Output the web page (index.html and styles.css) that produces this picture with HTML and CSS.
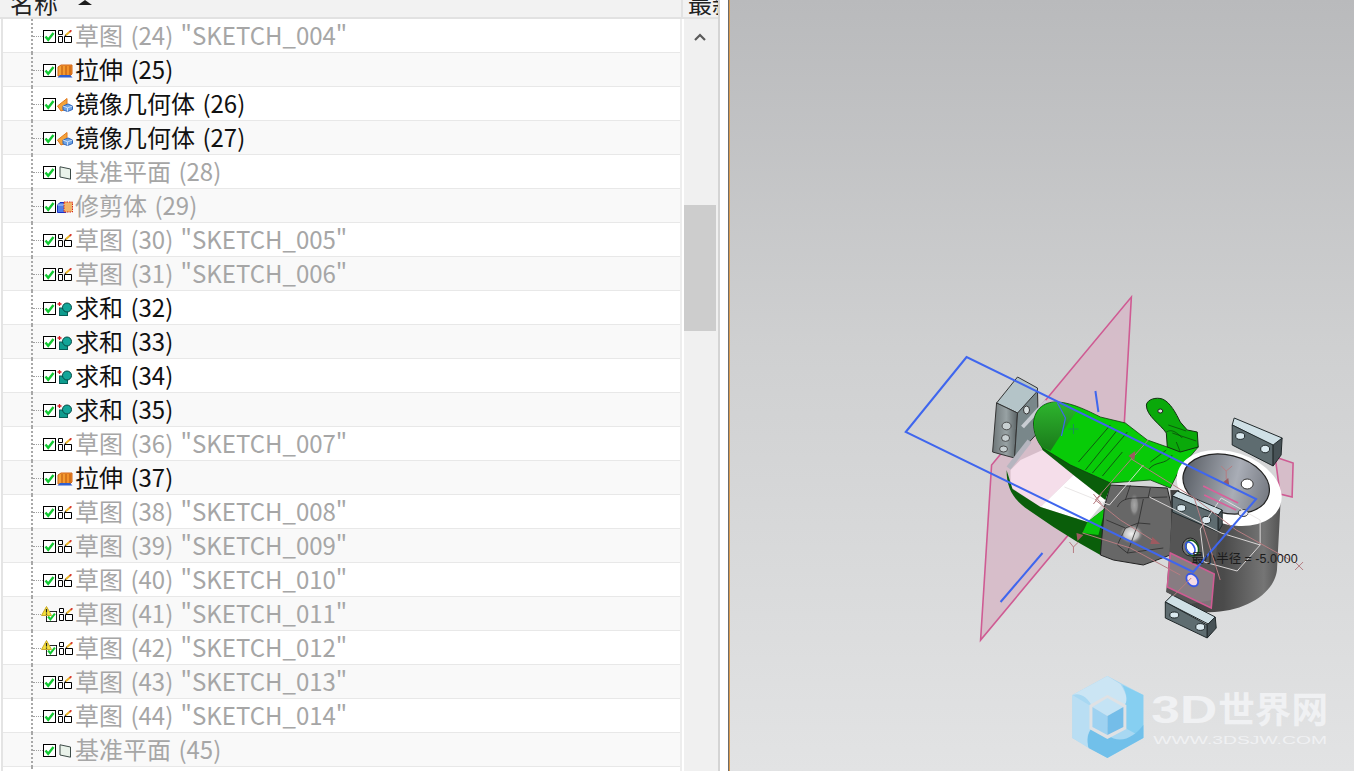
FILE: index.html
```html
<!DOCTYPE html>
<html lang="zh">
<head>
<meta charset="utf-8">
<title>部件导航器</title>
<link rel="stylesheet" href="styles.css">
</head>
<body>
<svg class="sprite" aria-hidden="true">
  <defs>
    <linearGradient id="ext" x1="0" x2="1" y1="0" y2="0">
      <stop offset="0" stop-color="#f7a63a"/>
      <stop offset="1" stop-color="#f08a22"/>
    </linearGradient>
    <symbol id="i-check" viewBox="0 0 13 13">
      <rect x="0.5" y="0.5" width="12" height="12" fill="#fff" stroke="#000"/>
      <path d="M2.5 6.5 L5.2 9.8 L10.5 3" fill="none" stroke="#12c832" stroke-width="2.4"/>
    </symbol>
    <symbol id="i-warn" viewBox="0 0 11 10">
      <path d="M5.5 0.5 L10.5 9.5 H0.5 Z" fill="#f6e13a" stroke="#c9a92c"/>
      <path d="M5.5 3 V6.5 M5.5 7.5 V8.8" stroke="#222" stroke-width="1.2"/>
    </symbol>
    <symbol id="i-sketch" viewBox="0 0 16 14">
      <path d="M1.5 .5 H5.5 V4.5 H1.5 Z M1.5 6.5 H5.5 V12.5 H1.5 Z M7.5 6.5 H14.5 V12.5 H7.5 Z" fill="#fff" stroke="#000"/>
      <path d="M8.5 5.5 L13 1.5" stroke="#e9b52a" stroke-width="2"/>
      <path d="M12.6 1.9 L14.4 0.3" stroke="#d8352a" stroke-width="1.8"/>
      <path d="M7.6 6 L9 5" stroke="#333"/>
    </symbol>
    <symbol id="i-extrude" viewBox="0 0 16 14">
      <path d="M1 3 L4 1 H15 V10 L13 12 H1 Z" fill="url(#ext)" stroke="#d2661a"/>
      <path d="M5 2 V11 M9 2 V11 M13 2 V11" stroke="#b9540f"/>
      <path d="M0.5 13.5 L3 11 H13 L15.5 13.5 Z" fill="#2f5fd0"/>
    </symbol>
    <symbol id="i-mirror" viewBox="0 0 16 14">
      <path d="M0.5 8 L10 .5 V11 L4 13 Z" fill="#f5a33a" stroke="#e0791c"/>
      <path d="M6 8 L11 6 L15.5 8 V11.5 L10.5 13.5 L6 11.8 Z" fill="#6ea4e6" stroke="#2d63b8"/>
      <path d="M6 8 L10.5 9.8 L15.5 8 M10.5 9.8 V13.5" fill="none" stroke="#cfe0f6"/>
    </symbol>
    <symbol id="i-plane" viewBox="0 0 13 14">
      <path d="M1.5 .8 L12 3 V13.2 L1.5 11 Z" fill="#e9f2ea" stroke="#3c4a46"/>
    </symbol>
    <symbol id="i-trim" viewBox="0 0 16 13">
      <path d="M.5 4.5 L3 2 H9 V12 H.5 Z" fill="#4f7fe8" stroke="#1a30c8"/>
      <path d="M.5 4.5 H8" stroke="#b8cdf6"/>
      <rect x="7" y="1.5" width="8.5" height="10" fill="#f2b46a" stroke="#d8261e" stroke-dasharray="1.5 1"/>
    </symbol>
    <symbol id="i-unite" viewBox="0 0 16 14">
      <path d="M2.5 0 V4 M.5 2 H4.5" stroke="#d91a20" stroke-width="1.3"/>
      <rect x="2.5" y="6" width="8" height="7.5" fill="#0e9c8e" stroke="#065f58"/>
      <circle cx="10" cy="5.5" r="4.5" fill="#13a598" stroke="#064a44"/>
    </symbol>
    <symbol id="i-up" viewBox="0 0 12 8">
      <path d="M1 7 L6 2 L11 7" fill="none" stroke="#5a5a5a" stroke-width="2.2"/>
    </symbol>
  </defs>
</svg>

<div class="app">
  <section class="navigator">
    <header class="head">
      <div class="head-name"><span class="head-label">名称</span><span class="sort-arrow"></span></div>
      <div class="head-last"><span class="head-label">最新</span></div>
    </header>
    <div class="body">
      <ul class="tree">
        <li class="row dim"><span class="stem"></span><svg class="check"><use href="#i-check"/></svg><svg class="icon"><use href="#i-sketch"/></svg><span class="label">草图 (24) "SKETCH_004"</span></li>
        <li class="row"><span class="stem"></span><svg class="check"><use href="#i-check"/></svg><svg class="icon"><use href="#i-extrude"/></svg><span class="label">拉伸 (25)</span></li>
        <li class="row"><span class="stem"></span><svg class="check"><use href="#i-check"/></svg><svg class="icon"><use href="#i-mirror"/></svg><span class="label">镜像几何体 (26)</span></li>
        <li class="row"><span class="stem"></span><svg class="check"><use href="#i-check"/></svg><svg class="icon"><use href="#i-mirror"/></svg><span class="label">镜像几何体 (27)</span></li>
        <li class="row dim"><span class="stem"></span><svg class="check"><use href="#i-check"/></svg><svg class="icon"><use href="#i-plane"/></svg><span class="label">基准平面 (28)</span></li>
        <li class="row dim"><span class="stem"></span><svg class="check"><use href="#i-check"/></svg><svg class="icon"><use href="#i-trim"/></svg><span class="label">修剪体 (29)</span></li>
        <li class="row dim"><span class="stem"></span><svg class="check"><use href="#i-check"/></svg><svg class="icon"><use href="#i-sketch"/></svg><span class="label">草图 (30) "SKETCH_005"</span></li>
        <li class="row dim"><span class="stem"></span><svg class="check"><use href="#i-check"/></svg><svg class="icon"><use href="#i-sketch"/></svg><span class="label">草图 (31) "SKETCH_006"</span></li>
        <li class="row"><span class="stem"></span><svg class="check"><use href="#i-check"/></svg><svg class="icon"><use href="#i-unite"/></svg><span class="label">求和 (32)</span></li>
        <li class="row"><span class="stem"></span><svg class="check"><use href="#i-check"/></svg><svg class="icon"><use href="#i-unite"/></svg><span class="label">求和 (33)</span></li>
        <li class="row"><span class="stem"></span><svg class="check"><use href="#i-check"/></svg><svg class="icon"><use href="#i-unite"/></svg><span class="label">求和 (34)</span></li>
        <li class="row"><span class="stem"></span><svg class="check"><use href="#i-check"/></svg><svg class="icon"><use href="#i-unite"/></svg><span class="label">求和 (35)</span></li>
        <li class="row dim"><span class="stem"></span><svg class="check"><use href="#i-check"/></svg><svg class="icon"><use href="#i-sketch"/></svg><span class="label">草图 (36) "SKETCH_007"</span></li>
        <li class="row"><span class="stem"></span><svg class="check"><use href="#i-check"/></svg><svg class="icon"><use href="#i-extrude"/></svg><span class="label">拉伸 (37)</span></li>
        <li class="row dim"><span class="stem"></span><svg class="check"><use href="#i-check"/></svg><svg class="icon"><use href="#i-sketch"/></svg><span class="label">草图 (38) "SKETCH_008"</span></li>
        <li class="row dim"><span class="stem"></span><svg class="check"><use href="#i-check"/></svg><svg class="icon"><use href="#i-sketch"/></svg><span class="label">草图 (39) "SKETCH_009"</span></li>
        <li class="row dim"><span class="stem"></span><svg class="check"><use href="#i-check"/></svg><svg class="icon"><use href="#i-sketch"/></svg><span class="label">草图 (40) "SKETCH_010"</span></li>
        <li class="row dim warned"><span class="stem"></span><svg class="warn"><use href="#i-warn"/></svg><svg class="check"><use href="#i-check"/></svg><svg class="icon"><use href="#i-sketch"/></svg><span class="label">草图 (41) "SKETCH_011"</span></li>
        <li class="row dim warned"><span class="stem"></span><svg class="warn"><use href="#i-warn"/></svg><svg class="check"><use href="#i-check"/></svg><svg class="icon"><use href="#i-sketch"/></svg><span class="label">草图 (42) "SKETCH_012"</span></li>
        <li class="row dim"><span class="stem"></span><svg class="check"><use href="#i-check"/></svg><svg class="icon"><use href="#i-sketch"/></svg><span class="label">草图 (43) "SKETCH_013"</span></li>
        <li class="row dim"><span class="stem"></span><svg class="check"><use href="#i-check"/></svg><svg class="icon"><use href="#i-sketch"/></svg><span class="label">草图 (44) "SKETCH_014"</span></li>
        <li class="row dim"><span class="stem"></span><svg class="check"><use href="#i-check"/></svg><svg class="icon"><use href="#i-plane"/></svg><span class="label">基准平面 (45)</span></li>
        <li class="row"></li>
      </ul>
      <div class="column-rest"></div>
      <div class="scrollbar">
        <svg class="scroll-up"><use href="#i-up"/></svg>
        <div class="scroll-thumb"></div>
      </div>
    </div>
  </section>
  <div class="gutter"></div>
  <main class="viewport">
    <svg class="scene" viewBox="729 0 625 771" preserveAspectRatio="none">
      <defs>
        <linearGradient id="cyl" x1="0" x2="1" y1="0" y2="0">
          <stop offset="0" stop-color="#3f3f3f"/>
          <stop offset=".5" stop-color="#4b4b4b"/>
          <stop offset=".85" stop-color="#757575"/>
          <stop offset="1" stop-color="#525252"/>
        </linearGradient>
        <linearGradient id="bore" x1="0" x2="1" y1="0" y2="0">
          <stop offset="0" stop-color="#5c6168"/>
          <stop offset=".6" stop-color="#a9adb6"/>
          <stop offset="1" stop-color="#767a82"/>
        </linearGradient>
        <linearGradient id="block" x1="0" x2="1" y1="0" y2="0">
          <stop offset="0" stop-color="#6e7678"/>
          <stop offset=".55" stop-color="#98a2a4"/>
          <stop offset="1" stop-color="#596163"/>
        </linearGradient>
        <radialGradient id="shine">
          <stop offset="0" stop-color="#f2f2f2"/>
          <stop offset=".6" stop-color="#c0c0c0"/>
          <stop offset="1" stop-color="#6a6a6a" stop-opacity="0"/>
        </radialGradient>
        <linearGradient id="greenleft" x1="0" x2="0" y1="0" y2="1">
          <stop offset="0" stop-color="#2eb52e"/>
          <stop offset="1" stop-color="#1a7a1a"/>
        </linearGradient>
      </defs>

      <!-- datum planes behind the part -->
      <path class="plane" d="M1131 297 L1124 422 L1067 536 L980 640 L991 465 Z"/>
      <path class="plane" d="M1275 457 L1293 463 L1292 497 L1280 494 Z"/>

      <!-- left block -->
      <path fill="#b4c4c8" stroke="#333" d="M996 403 L1017 377 L1037 388 L1036 410 L1017 413 Z"/>
      <path fill="url(#block)" stroke="#333" d="M996 403 L1017 413 L1014 458 L992 452 Z"/>
      <path fill="#79878a" stroke="#333" d="M1017 413 L1037 391 L1038 432 L1014 458 Z"/>
      <ellipse class="hole" cx="1006" cy="426" rx="4.5" ry="3.8"/>
      <ellipse class="hole" cx="1005" cy="438" rx="4" ry="3.4"/>
      <ellipse class="hole" cx="1003" cy="449" rx="4" ry="3"/>
      <ellipse cx="1026" cy="410" rx="3" ry="4" fill="#d8dfe0" stroke="#333"/>
      <path d="M1022 427 L1046 401" stroke="#c8ccd2" stroke-width="4"/>
      <path d="M1008 468 L1029 441" stroke="#b5b5bf" stroke-width="5"/>

      <!-- loop opening -->
      <path fill="#f5deea" d="M1010 470 L1020 460 L1042 450 L1073 475 L1040 507 L1010 487 Z"/>
      <path fill="#fff" d="M1073 475 L1105 500 L1087 522 L1040 507 Z"/>

      <!-- lower green band -->
      <path fill="#0a5e0a" d="M1006 470 C1006 490 1014 500 1028 510 L1053 527 L1077 542 L1100 555 L1106 507 L1087 522 L1040 507 L1012 489 Z"/>
      <path fill="#0bc40b" d="M1087 522 L1105 508 L1098 535 L1082 533 Z"/>

      <!-- central grey arm -->
      <path fill="#676767" stroke="#222" d="M1110 485 L1167 488 L1172 510 L1170 555 L1143 565 L1113 560 L1100 555 L1104 507 Z"/>
      <ellipse cx="1131" cy="534" rx="12" ry="10" fill="url(#shine)"/>
      <ellipse cx="1134" cy="505" rx="5" ry="12" fill="url(#shine)" opacity=".45"/>
      <path d="M1117 507 C1120 500 1127 498 1135 498 L1167 497 M1143 499 L1138 523 L1127 553 M1125 528 L1117 545 L1127 553 L1163 548 M1106 520 L1125 528 L1138 523 L1150 524 M1130 485 L1125 500 M1150 488 L1148 497" fill="none" stroke="#2c2c2c" stroke-width=".8"/>

      <!-- cylinder -->
      <path fill="url(#cyl)" d="M1170 490 C1172 520 1170 570 1166 592 L1204 612 C1245 614 1277 592 1277 567 L1281 492 Z"/>

      <!-- upper dark band and green body -->
      <path fill="#0a5e0a" d="M1033 423 L1042 450 L1073 475 L1105 500 L1111 483 L1060 440 Z"/>
      <path fill="#08cb08" stroke="#0f3d0f" stroke-width=".8" d="M1033 423 C1034 408 1045 401 1058 402 C1072 403 1088 411 1100 417 L1125 423 L1147 440 L1167 447 L1198 447 L1180 468 L1170 488 L1150 480 L1110 483 L1070 465 L1042 448 C1037 442 1033 433 1033 423 Z"/>
      <path fill="url(#greenleft)" d="M1034 423 C1035 409 1046 402 1058 402 L1076 411 L1050 451 L1043 448 C1037 442 1033 433 1034 423 Z"/>
      <path d="M1085 470 L1117 430 M1092 473 L1127 432 M1078 462 L1110 425 M1102 476 L1122 452 M1150 462 L1166 450 M1148 470 C1155 460 1165 466 1172 455" fill="none" stroke="#123d12" stroke-width=".8"/>
      <path d="M1068 429 H1078 M1073 424 V434" stroke="#1c8f5a"/>

      <!-- top of cylinder -->
      <ellipse cx="1229" cy="488" rx="54" ry="36" fill="#fff" transform="rotate(18 1229 488)"/>
      <ellipse cx="1226" cy="484" rx="44" ry="29" fill="url(#bore)" stroke="#222" stroke-width="1.2" transform="rotate(14 1226 484)"/>
      <ellipse cx="1247" cy="484" rx="6" ry="5" fill="#fff" stroke="#333"/>
      <ellipse cx="1243" cy="513" rx="5" ry="3.5" fill="#e9e9f0" stroke="#333"/>

      <!-- green handle -->
      <path fill="#0aa90a" stroke="#123012" d="M1146 405 C1147 399 1156 397 1162 399 C1170 402 1176 414 1180 422 L1187 430 L1197 432 L1198 447 L1180 452 L1167 447 L1166 433 C1160 424 1146 416 1146 405 Z"/>
      <ellipse cx="1160" cy="411" rx="2.5" ry="2" fill="#ddd" stroke="#222"/>
      <path d="M1168 425 L1186 431 M1172 433 L1196 441 M1176 442 L1180 452 M1166 432 C1172 428 1178 434 1182 438" fill="none" stroke="#0a3f0a" stroke-width=".7"/>

      <!-- lugs -->
      <path class="lug-top" d="M1234 418 L1282 438 L1275 447 L1232 425 Z"/>
      <path class="lug-front" d="M1232 425 L1273 445 L1273 466 L1232 445 Z"/>
      <path class="lug-side" d="M1282 438 L1281 455 L1273 466 L1273 445 Z"/>
      <ellipse class="lug-hole" cx="1240" cy="436" rx="4.5" ry="3.4"/>
      <ellipse class="lug-hole" cx="1265" cy="449" rx="4.5" ry="3.8"/>

      <path fill="#555" d="M1172 512 L1218 532 L1212 600 L1190 604 L1166 592 L1170 540 Z"/>
      <ellipse cx="1190" cy="547" rx="8" ry="9" fill="#777" stroke="#222"/>
      <path class="lug-top" d="M1177 491 L1222 510 L1218 515 L1172 496 Z"/>
      <path class="lug-front" d="M1172 496 L1218 515 L1218 532 L1172 512 Z"/>
      <path class="lug-side" d="M1222 510 L1222 525 L1218 532 L1218 515 Z"/>
      <ellipse class="lug-hole" cx="1181" cy="508" rx="4.5" ry="3.4"/>
      <ellipse class="lug-hole" cx="1206" cy="520" rx="4.5" ry="3.6"/>

      <path class="lug-top" d="M1172 595 L1215 617 L1208 624 L1165 602 Z"/>
      <path class="lug-front" d="M1165 602 L1207 625 L1207 638 L1165 618 Z"/>
      <path class="lug-side" d="M1215 617 L1216 628 L1207 638 L1207 625 Z"/>
      <ellipse class="lug-hole" cx="1174" cy="615" rx="4.5" ry="3"/>
      <ellipse class="lug-hole" cx="1200" cy="627" rx="4.5" ry="3.4"/>

      <!-- hole on arm and small datum -->
      <ellipse cx="1192" cy="548" rx="6" ry="8" fill="#fff" stroke="#0f5a12" stroke-width="1.5" transform="rotate(-25 1192 548)"/>
      <path fill="#e9c6d6" fill-opacity=".35" stroke="#cf5b93" stroke-width="1.6" d="M1170 553 L1214 574 L1211 608 L1167 587 Z"/>
      <ellipse cx="1192" cy="580" rx="5" ry="7" fill="#f3dbe6" stroke="#3656e8" stroke-width="1.8" transform="rotate(-40 1192 580)"/>
      <ellipse cx="1190" cy="548" rx="4" ry="6.5" fill="none" stroke="#3656e8" stroke-width="1.6" transform="rotate(-30 1190 548)"/>

      <!-- wireframe and csys -->
      <path class="wire-white" d="M1064 487 L1109 505 L1143 465 M1149 497 L1221 533 L1260 545 L1260 520 L1221 498 L1200 529 L1204 562 L1237 571 L1260 545" />
      <path class="csys" d="M1095 500 L1131 459 L1194 498 L1220 580 M1082 533 L1130 548 L1180 575 M1095 500 L1120 520 L1152 540 M1131 459 L1148 440 M1191 578 L1173 596 M1194 498 L1236 530 L1290 560" />
      <path class="csys-solid" d="M1128 456 L1135 451 L1134 460 Z M1076 533 L1083 535 L1077 541 Z M1152 537 L1160 544 L1150 544 Z M1222 483 L1228 478 L1229 485 Z"/>
      <path class="csys" d="M1221 466 L1226 471 L1232 466 M1226 471 V479 M1093 494 L1101 504 M1101 494 L1093 504 M1069 542 L1073 547 L1078 542 M1073 547 V553 M1295 562 L1303 570 M1303 562 L1295 570"/>
      <path d="M1203 486 L1238 503 M1204 495 L1236 510" fill="none" stroke="#d9609a" stroke-width="1.6"/>

      <!-- sketch lines -->
      <path class="blue" d="M966 357 L905 432 L1193 572 L1256 499 Z"/>
      <path class="blue" d="M1095 391 L1098 412 M1042 553 L1000 602"/>
      <path class="blue thin" d="M1057 403 L1065 418 L1061 436"/>

      <text class="dim-text" x="1191" y="563">最小半径 = -5.0000</text>

      <!-- watermark -->
      <g class="mark">
        <path fill="#a8d8f2" d="M1107 676 L1143 695 L1143 738 L1107 758 L1072 738 L1072 695 Z"/>
        <path fill="#cbe5f4" d="M1107 676 L1120 684 C1127 695 1128 702 1123 707 L1107 698 L1092 707 C1088 698 1080 692 1072 695 Z"/>
        <path fill="#86cff1" d="M1122 685 L1143 695 L1143 738 L1123 727 L1123 707 C1128 702 1127 695 1122 685 Z"/>
        <path fill="#71c0ea" d="M1143 725 L1143 738 L1107 758 L1088 748 C1086 740 1087 733 1092 727 L1107 735 C1120 745 1134 737 1143 725 Z"/>
        <path fill="#b9def3" d="M1072 695 L1092 707 L1092 727 C1086 733 1086 740 1088 748 L1072 738 Z"/>
        <path fill="#dfe1e4" d="M1107 695 L1126 705 L1126 729 L1107 739 L1089 729 L1089 705 Z"/>
        <path fill="#c4e3f5" d="M1107 698 L1123 707 L1107 716 L1092 707 Z"/>
        <path fill="#9ed2f1" d="M1092 707 L1107 716 L1107 735 L1092 727 Z"/>
        <path fill="#74bde9" d="M1123 707 L1123 727 L1107 735 L1107 716 Z"/>
        <text class="mark-latin" x="1151" y="723" textLength="66" lengthAdjust="spacingAndGlyphs">3D</text>
        <text class="mark-cjk" x="1218" y="723">世界网</text>
        <text class="mark-small" x="1153" y="744" textLength="174" lengthAdjust="spacingAndGlyphs">WWW.3DSJW.COM</text>
      </g>
    </svg>
  </main>
</div>
</body>
</html>
```

FILE: styles.css
```css
* { box-sizing: border-box; }
html, body { margin: 0; height: 100%; overflow: hidden; background: #fff; }
body { font-family: "Noto Sans CJK SC", "Noto Sans", sans-serif; }
.sprite { position: absolute; width: 0; height: 0; }
.app { display: flex; height: 771px; width: 1354px; overflow: hidden; }

.navigator { width: 718px; flex: none; display: flex; flex-direction: column; background: #fff; }
.head { height: 19px; flex: none; display: flex; background: #f2f2f2; border-bottom: 2px solid #e2e2e2; overflow: hidden; color: #222; }
.head-name { width: 683px; flex: none; display: flex; gap: 20px; padding-left: 10px; border-right: 2px solid #e2e2e2; }
.head-last { flex: 1; padding-left: 5px; overflow: hidden; }
.head-label { display: block; font-size: 24px; line-height: 24px; margin-top: -9px; white-space: nowrap; }
.sort-arrow { display: block; width: 0; height: 0; border-left: 7px solid transparent; border-right: 7px solid transparent; border-bottom: 5px solid #1c1c1c; }

.body { flex: 1; display: flex; min-height: 0; border-left: 2px solid #e4e4e4; margin-left: 1px; }
.tree { list-style: none; margin: 0; padding: 0; width: 677px; flex: none; overflow: hidden; background: #fff; }
.row { position: relative; height: 34px; display: flex; align-items: center; padding: 2px 0 0 40px; border-bottom: 1px solid #e8e8e8; color: #111; font-size: 24px; word-spacing: 2px; background: #fff; white-space: nowrap; }
.row:nth-child(even) { background: #f9f9f9; }
.row::before { content: ""; position: absolute; left: 28px; top: 0; bottom: -1px; border-left: 2px dotted #a8a8a8; }
.row.dim { color: #a6a6a6; }
.stem { position: absolute; left: 30px; top: 17px; width: 10px; border-top: 1px dotted #a0a0a0; }
.check { width: 13px; height: 13px; flex: none; display: block; }
.icon { width: 16px; height: 14px; flex: none; display: block; margin-left: 1px; }
.label { margin-left: 2px; line-height: 31px; position: relative; top: -2px; }
.warned .warn { position: absolute; left: 38px; top: 9px; width: 11px; height: 10px; z-index: 1; }
.warned .check { width: 11px; height: 11px; margin-left: 3px; margin-top: 3px; }
.warned .icon { margin-right: -1px; }

.column-rest { width: 4px; flex: none; background: linear-gradient(90deg, #ededed 0 2px, #fff 2px); }
.scrollbar { flex: 1; background: #f0f0f0; position: relative; }
.scroll-up { position: absolute; left: 10px; top: 14px; width: 12px; height: 8px; }
.scroll-thumb { position: absolute; left: 0; right: 2px; top: 186px; height: 126px; background: #cdcdcd; }

.gutter { width: 11px; flex: none; background: #fff; border-left: 2px solid #d4d4d4; border-right: 1px solid #6b6b6b; }
.viewport { flex: 1; min-width: 0; border-left: 1px solid #d99a4e; background: linear-gradient(180deg, #b9babc 0%, #cfd0d1 45%, #e2e3e4 100%); }
.scene { display: block; width: 100%; height: 100%; }

.plane { fill: #d6bac8; fill-opacity: .9; stroke: #cf5b93; stroke-width: 1.6; }
.hole { fill: #c8d0d2; stroke: #333; stroke-width: .8; }
.lug-top { fill: #cfe0e6; stroke: #20282a; }
.lug-front { fill: #5e6c70; stroke: #20282a; }
.lug-side { fill: #475256; stroke: #20282a; }
.lug-hole { fill: #dbeaf0; stroke: #20282a; }
.wire-white { fill: none; stroke: #e7e3e3; stroke-width: .9; }
.csys { fill: none; stroke: #b67c82; stroke-width: 1; }
.csys-solid { fill: #9c5a60; }
.blue { fill: none; stroke: #3f66ee; stroke-width: 2; }
.blue.thin { stroke-width: 1.2; }
.dim-text { font-family: "Liberation Sans", "Noto Sans CJK SC", sans-serif; font-size: 12.5px; fill: #1c1c1c; }
.mark-latin { font-family: "Liberation Sans", sans-serif; font-weight: 700; font-size: 38px; fill: #f0f1f3; }
.mark-cjk { font-family: "Noto Sans CJK SC", sans-serif; font-weight: 700; font-size: 36.7px; fill: #f0f1f3; }
.mark-small { font-family: "Liberation Sans", sans-serif; font-size: 11px; fill: #f0f1f3; }
```
